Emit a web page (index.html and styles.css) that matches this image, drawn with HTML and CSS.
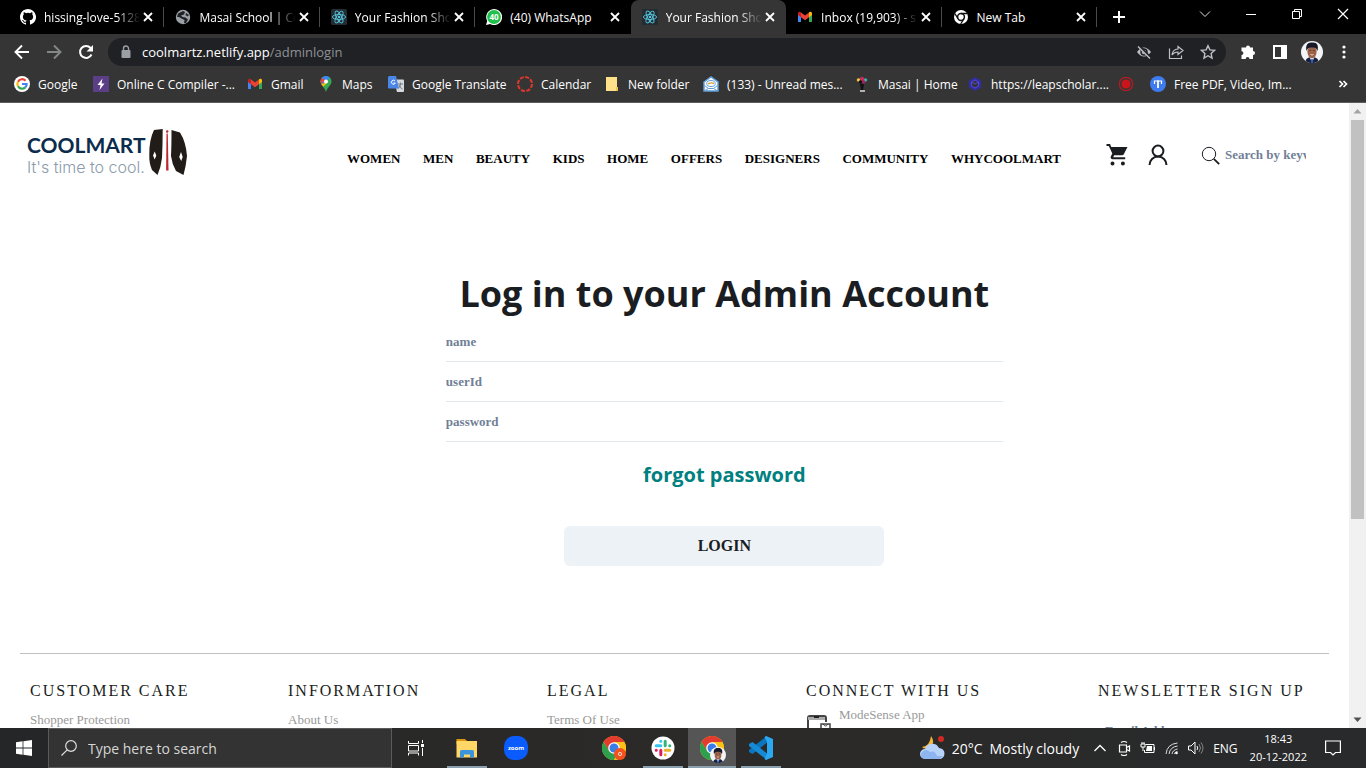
FILE: index.html
```
<!DOCTYPE html>
<html lang="en">
<head>
<meta charset="utf-8">
<title>Your Fashion Shop</title>
<link rel="stylesheet" href="styles.css">
</head>
<body>
<svg class="sprite" aria-hidden="true">
  <symbol id="close" viewBox="0 0 16 16"><path d="M4 4l8 8M12 4l-8 8" stroke="#fff" stroke-width="1.8" fill="none"/></symbol>
  <symbol id="react" viewBox="0 0 16 16"><rect width="16" height="16" rx="1.5" fill="#222c33"/><g fill="none" stroke="#58c4dc" stroke-width=".9"><ellipse cx="8" cy="8" rx="6.6" ry="2.5"/><ellipse cx="8" cy="8" rx="6.6" ry="2.5" transform="rotate(60 8 8)"/><ellipse cx="8" cy="8" rx="6.6" ry="2.5" transform="rotate(120 8 8)"/></g><circle cx="8" cy="8" r="1.3" fill="#58c4dc"/></symbol>
  <symbol id="gmail" viewBox="0 0 16 16"><path d="M1 4v9h3V7.200z" fill="#4285f4"/><path d="M12 7.200V13h3V4z" fill="#34a853"/><path d="M4 3.500v4.700l4 3 4-3V3.500L8 6.500z" fill="#ea4335"/><path d="M1 4.500c0-2 2-2.200 3-1.200v5L1 6z" fill="#c5221f"/><path d="M15 4.500c0-2-2-2.200-3-1.200v5L15 6z" fill="#fbbc04"/></symbol>
  <symbol id="chrome" viewBox="0 0 24 24"><circle cx="12" cy="12" r="12" fill="#fbc116"/><path d="M1.600 6A12 12 0 0 1 22.400 6H12L7 15z" fill="#e33b2e"/><path d="M1.600 6A12 12 0 0 0 12 24l5-9-9.500.500z" fill="#2da04e"/><path d="M12 6.500h10.700A12 12 0 0 1 12 24l5-9z" fill="#fbc116"/><circle cx="12" cy="12" r="5.800" fill="#fff"/><circle cx="12" cy="12" r="4.500" fill="#3a7de8"/></symbol>
  <symbol id="face" viewBox="0 0 22 22"><circle cx="11" cy="11" r="11" fill="#f3f4f6"/><path d="M4.500 20a11 11 0 0 0 13 0c-1-3-3-4-6.500-4s-5.500 1-6.500 4z" fill="#17203c"/><path d="M8.500 16h5l-2.500 5.500z" fill="#dbe8ff"/><path d="M10.300 18h1.400l.5 4h-2.400z" fill="#3457a8"/><ellipse cx="11" cy="11" rx="4.600" ry="6.200" fill="#9c6248"/><path d="M5.600 10C4 4 7 1 11 1.500c5-.5 7 3 5.400 8.500C15.500 7 14 6 11 6.500 8 6 6.500 7 5.600 10z" fill="#17182a"/><path d="M8.300 9.500h1.500M12.200 9.500h1.500" stroke="#5a382d"/><path d="M9.500 13.500q1.500 1 3 0" stroke="#e8d5cc" fill="none"/></symbol>
</svg>

<header class="browser">
  <div class="tabstrip">
    <div class="tabs">
      <div class="tab"><svg class="icon" viewBox="0 0 16 16"><path fill="#fff" d="M8 0C3.580 0 0 3.580 0 8c0 3.540 2.290 6.530 5.470 7.590.4.070.55-.17.55-.38 0-.19-.010-.82-.010-1.490-2.010.37-2.530-.49-2.690-.94-.090-.23-.48-.94-.82-1.130-.28-.15-.68-.52-.010-.53.63-.010 1.080.58 1.230.82.72 1.210 1.870.87 2.330.66.070-.52.28-.87.51-1.070-1.780-.2-3.640-.89-3.640-3.950 0-.87.31-1.590.82-2.150-.080-.2-.36-1.020.080-2.120 0 0 .67-.21 2.200.82a7.600 7.600 0 0 1 4 0c1.530-1.040 2.200-.82 2.200-.82.44 1.100.16 1.920.080 2.120.51.56.82 1.270.82 2.150 0 3.070-1.870 3.750-3.650 3.950.29.25.54.73.54 1.480 0 1.070-.010 1.930-.010 2.200 0 .21.15.46.55.38A8 8 0 0 0 8 0z"/></svg><span class="tab-title">hissing-love-5128</span><button class="tab-close" aria-label="Close tab"><svg class="icon"><use href="#close"/></svg></button></div>
      <div class="tab"><svg class="icon" viewBox="0 0 16 16"><circle cx="8" cy="8" r="7.200" fill="#9aa0a6"/><path d="M3 4.500L8 2l2 1-1 2.500-3 1 1.500 1.500 3 .500 2.500 2-2 3.500H9l.500-3-3-1.500L4 8H2z" fill="#202124"/><path d="M11 4l3 2-1.500 1.500L10.500 6z" fill="#202124"/></svg><span class="tab-title">Masai School | Co</span><button class="tab-close" aria-label="Close tab"><svg class="icon"><use href="#close"/></svg></button></div>
      <div class="tab"><svg class="icon"><use href="#react"/></svg><span class="tab-title">Your Fashion Sho</span><button class="tab-close" aria-label="Close tab"><svg class="icon"><use href="#close"/></svg></button></div>
      <div class="tab before-active"><svg class="icon" viewBox="0 0 16 16"><path d="M0 16l1.200-4A8 8 0 1 1 4.200 15z" fill="#fff"/><circle cx="8" cy="8" r="6.900" fill="#1fc14b"/><text x="8" y="10.800" class="badge-text">40</text></svg><span class="tab-title whole">(40) WhatsApp</span><button class="tab-close" aria-label="Close tab"><svg class="icon"><use href="#close"/></svg></button></div>
      <div class="tab active"><svg class="icon"><use href="#react"/></svg><span class="tab-title">Your Fashion Sho</span><button class="tab-close" aria-label="Close tab"><svg class="icon"><use href="#close"/></svg></button></div>
      <div class="tab"><svg class="icon"><use href="#gmail"/></svg><span class="tab-title">Inbox (19,903) - s</span><button class="tab-close" aria-label="Close tab"><svg class="icon"><use href="#close"/></svg></button></div>
      <div class="tab"><svg class="icon" viewBox="0 0 16 16"><circle cx="8" cy="8" r="7" fill="#fff"/><circle cx="8" cy="8" r="3.400" fill="none" stroke="#111" stroke-width="1.500"/><path d="M8 4.500h6.500M5 9.700L1.800 4.500M11 9.700l-3.300 5.300" stroke="#111" stroke-width="1.300"/></svg><span class="tab-title whole">New Tab</span><button class="tab-close" aria-label="Close tab"><svg class="icon"><use href="#close"/></svg></button></div>
    </div>
    <button class="new-tab" aria-label="New tab"><svg class="icon" viewBox="0 0 16 16"><path d="M8 2v12M2 8h12" stroke="#fff" stroke-width="2"/></svg></button>
    <div class="window-controls">
      <button aria-label="Search tabs"><svg class="icon" viewBox="0 0 16 16"><path d="M3 5.500l5 5 5-5" stroke="#ddd" fill="none"/></svg></button>
      <button aria-label="Minimize"><svg class="icon" viewBox="0 0 16 16"><path d="M3 8.500h10" stroke="#fff"/></svg></button>
      <button aria-label="Restore"><svg class="icon" viewBox="0 0 16 16"><path d="M3.500 5.500h7v7h-7zM5.500 5V3.500h7v7H11" stroke="#fff" fill="none"/></svg></button>
      <button aria-label="Close"><svg class="icon" viewBox="0 0 16 16"><path d="M3 3l10 10M13 3L3 13" stroke="#fff" stroke-width="1.200"/></svg></button>
    </div>
  </div>

  <div class="toolbar">
    <button class="tool" aria-label="Back"><svg class="icon" viewBox="0 0 16 16"><path d="M15 8H2M8 1.500L1.500 8 8 14.500" stroke="#fff" stroke-width="1.900" fill="none"/></svg></button>
    <button class="tool" aria-label="Forward"><svg class="icon" viewBox="0 0 16 16"><path d="M1 8h13M8 1.500L14.500 8 8 14.500" stroke="#858687" stroke-width="1.900" fill="none"/></svg></button>
    <button class="tool" aria-label="Reload"><svg class="icon" viewBox="0 0 16 16"><path d="M13.500 10.500A6 6 0 1 1 12.600 4" stroke="#fff" stroke-width="2" fill="none"/><path d="M15 1v6.500H8.500z" fill="#fff"/></svg></button>
    <div class="omnibox">
      <svg class="icon" viewBox="0 0 16 16"><rect x="3.500" y="6" width="9" height="8" rx="1" fill="#9aa0a6"/><path d="M5.500 6.500V4.500a2.500 2.500 0 0 1 5 0v2" stroke="#9aa0a6" stroke-width="1.400" fill="none"/></svg>
      <span class="url">coolmartz.netlify.app<span class="path">/adminlogin</span></span>
      <button class="tool" aria-label="Third-party cookies blocked"><svg class="icon" viewBox="0 0 16 16"><path d="M1 8q7-9 14 0-7 9-14 0z" fill="#bdc1c6"/><circle cx="8" cy="8" r="3" fill="#bdc1c6" stroke="#202124" stroke-width="1.500"/><path d="M2.500 1.500l12 12.500" stroke="#202124" stroke-width="3"/><path d="M2 2.500l12 12" stroke="#bdc1c6" stroke-width="1.400"/></svg></button>
      <button class="tool" aria-label="Share"><svg class="icon" viewBox="0 0 16 16"><path d="M1.500 4.500v10h12v-3M10 2.500l5 4-5 4V8Q6 8 4 11q.500-5.500 6-6z" stroke="#bdc1c6" stroke-width="1.200" fill="none"/></svg></button>
      <button class="tool" aria-label="Bookmark"><svg class="icon" viewBox="0 0 16 16"><path d="M8 1.700l1.900 4.200 4.600.500-3.400 3.100.900 4.500-4-2.300L4 14l.900-4.500-3.400-3.100 4.600-.500z" stroke="#bdc1c6" stroke-width="1.400" fill="none"/></svg></button>
    </div>
    <div class="extensions">
      <button class="tool" aria-label="Extensions"><svg class="icon" viewBox="0 0 16 16"><path d="M6 3.500a2 2 0 0 1 4 0h3V7a2 2 0 0 1 0 4v4H9.500a1.900 1.900 0 0 0-3.800 0H1.500v-4a1.900 1.900 0 0 0 0-3.800V3.500z" fill="#fff"/></svg></button>
      <button class="tool" aria-label="Side panel"><svg class="icon" viewBox="0 0 16 16"><path d="M1 1h14v14H1zM3 3v10h6V3z" fill="#fff" fill-rule="evenodd"/></svg></button>
      <button class="tool" aria-label="Profile"><svg class="avatar"><use href="#face"/></svg></button>
      <button class="tool" aria-label="Menu"><svg class="icon" viewBox="0 0 16 16"><g fill="#fff"><circle cx="8" cy="3" r="1.600"/><circle cx="8" cy="8" r="1.600"/><circle cx="8" cy="13" r="1.600"/></g></svg></button>
    </div>
  </div>

  <nav class="bookmarks" aria-label="Bookmarks">
    <a href="#"><svg class="icon" viewBox="0 0 16 16"><circle cx="8" cy="8" r="8" fill="#fff"/><g fill="none" stroke-width="2.200"><path d="M11.500 4.700A4.600 4.600 0 0 0 4 5.700" stroke="#ea4335"/><path d="M4 5.700a4.600 4.600 0 0 0 0 4.600" stroke="#fbbc04"/><path d="M4 10.300a4.600 4.600 0 0 0 7.300 1.100" stroke="#34a853"/><path d="M11.300 11.400A4.600 4.600 0 0 0 12.600 8H8" stroke="#4285f4"/></g></svg>Google</a>
    <a href="#"><svg class="icon" viewBox="0 0 16 16"><rect width="16" height="16" fill="#5a3f87"/><path d="M9.500 2.500L4.500 9h3l-1 5 5-6.500h-3z" fill="#fff"/></svg>Online C Compiler -...</a>
    <a href="#"><svg class="icon"><use href="#gmail"/></svg>Gmail</a>
    <a href="#"><svg class="icon" viewBox="0 0 16 16"><path d="M8 0a5.500 5.500 0 0 1 5.500 5.500C13.500 9 9.500 11 8 16 6.500 11 2.500 9 2.500 5.500A5.500 5.500 0 0 1 8 0z" fill="#34a853"/><path d="M3.500 9L12 1.700A5.500 5.500 0 0 0 3.800 2L2.500 5.500z" fill="#4285f4"/><path d="M3.800 2A5.500 5.500 0 0 0 3.300 8L7 4z" fill="#ea4335"/><path d="M3.300 8l2 2.700L10 6z" fill="#fbbc04"/><circle cx="8" cy="5.500" r="2" fill="#fff"/></svg>Maps</a>
    <a href="#"><svg class="icon" viewBox="0 0 16 16"><path d="M6 3.500h9a1 1 0 0 1 1 1V15a1 1 0 0 1-1 1H9z" fill="#d5d8dc"/><path d="M10 8h5M12.500 6.500V8q0 3-2.500 4.500M11 9q1 3 3.500 4" stroke="#747b84" fill="none"/><path d="M1 0h7l3 12.500H1a1 1 0 0 1-1-1V1z" fill="#4a86e8"/><path d="M7 5a2 2 0 1 0 .3 2H5.500" stroke="#fff" fill="none"/></svg>Google Translate</a>
    <a href="#"><svg class="icon" viewBox="0 0 16 16"><circle cx="8" cy="8" r="7" fill="none" stroke="#e0382e" stroke-width="2" stroke-dasharray="4 1.500"/></svg>Calendar</a>
    <a href="#"><svg class="icon" viewBox="0 0 16 16"><path d="M2 1h11v10l1 1v3H2z" fill="#ffe08a"/><path d="M12 11h2v4h-2z" fill="#eec24c"/></svg>New folder</a>
    <a href="#"><svg class="icon" viewBox="0 0 16 16"><path d="M1 6l7-5 7 5v9H1z" fill="#fff" stroke="#5f9dd8" stroke-width="1.500"/><ellipse cx="8" cy="7.500" rx="4.300" ry="3" fill="#fff" stroke="#5f9dd8"/><path d="M5 8q3-2 6-.5" stroke="#d69b35" stroke-width="1.400" fill="none"/><path d="M1.500 9.500l4 3h5l4-3M2 14.500l3.500-2M14 14.500l-3.500-2" fill="none" stroke="#5f9dd8"/></svg>(133) - Unread mes...</a>
    <a href="#"><svg class="icon" viewBox="0 0 16 16"><circle cx="4.500" cy="4" r="1.800" fill="#f0c640"/><circle cx="8" cy="3" r="2.200" fill="#c92a5c"/><circle cx="11.500" cy="4" r="1.800" fill="#3caeaa"/><circle cx="6.500" cy="6" r="1.800" fill="#111"/><circle cx="9.700" cy="6" r="1.800" fill="#a0245a"/><path d="M6 8h4l-1 6H7z" fill="#111"/><path d="M6 15h5" stroke="#ddd" stroke-width="1.500"/></svg>Masai | Home</a>
    <a href="#"><svg class="icon" viewBox="0 0 16 16"><path d="M8 1.200l6 3.400v6.800l-6 3.400-6-3.400V4.600z" fill="#322da4"/><path d="M8 4l3.500 2v4L8 12l-3.500-2V6z" fill="#333" stroke="#5548e0"/><path d="M5 6.500l3 1.500 3-1.500" stroke="#5548e0" fill="none"/></svg>https://leapscholar....</a>
    <a href="#" aria-label="Recorder"><svg class="icon" viewBox="0 0 16 16"><circle cx="8" cy="8" r="6.700" fill="none" stroke="#b51c20" stroke-width="1.200"/><circle cx="8" cy="8" r="4.600" fill="#c9151b"/></svg></a>
    <a href="#"><svg class="icon" viewBox="0 0 16 16"><circle cx="8" cy="8" r="8" fill="#3e7bee"/><path d="M4.500 8V5h7v3" stroke="#fff" stroke-width="1.200" fill="none"/><path d="M8 4.500v7.500" stroke="#fff" stroke-width="1.800"/></svg>Free PDF, Video, Im...</a>
    <button class="tool more" aria-label="More bookmarks"><svg class="icon" viewBox="0 0 16 16"><path d="M4.500 5l3 3-3 3M8.500 5l3 3-3 3" stroke="#fff" stroke-width="1.700" fill="none"/></svg></button>
  </nav>
</header>

<div class="viewport">
  <div class="page">
    <header class="site-header">
      <a class="logo" href="#">
        <span class="logo-words"><span class="logo-name">COOLMART</span><span class="logo-tag">It's time to cool.</span></span>
        <svg class="logo-mark" viewBox="0 0 38 48" aria-hidden="true"><path d="M5 2l8.700-1q0 15-.7 29-1 9-4.500 17L3 42Q0 35 .3 27 0 12 5 2zM22.500 2L31 4.500q6 9.500 7 23.500-1 10-3.500 19L27 43q-4-7-5-15 .5-10 .5-26z" fill="#221c18"/><path d="M5.700 23.500l1.600 4-1.600 4-1.700-4zM32 24l1.700 5-1.500 4-2-4z" fill="#fff"/><path d="M17.500 5.500h1.300l.7 37h-2.400z" fill="#bb2630"/><circle cx="18.200" cy="3.500" r="1.200" fill="#bb2630"/></svg>
      </a>
      <nav class="site-nav">
        <a href="#">WOMEN</a><a href="#">MEN</a><a href="#">BEAUTY</a><a href="#">KIDS</a><a href="#">HOME</a><a href="#">OFFERS</a><a href="#">DESIGNERS</a><a href="#">COMMUNITY</a><a href="#">WHYCOOLMART</a>
      </nav>
      <div class="site-actions">
        <a href="#" aria-label="Cart"><svg class="glyph" viewBox="0 0 24 24"><path fill="#1a1d21" d="M7.500 18.500a2 2 0 1 0 0 4 2 2 0 0 0 0-4zM1.500 1v2h2.300l3.500 7.600-1.400 2.600c-.8 1.400.2 3 1.800 3h12.500v-2H8.200l1-2h7.900c.8 0 1.400-.4 1.700-1L22.500 4H6.200l-1.100-3zM17.900 18.500a2 2 0 1 0 0 4 2 2 0 0 0 0-4z"/></svg></a>
        <a href="#" aria-label="Account"><svg class="glyph" viewBox="0 0 24 24"><circle cx="12" cy="8" r="5.400" fill="none" stroke="#1a1d21" stroke-width="2"/><path d="M3.500 22a8.500 8.500 0 0 1 17 0" fill="none" stroke="#1a1d21" stroke-width="2"/></svg></a>
      </div>
      <form class="site-search">
        <label for="q" aria-label="Search"><svg class="search-icon" viewBox="0 0 20 20"><circle cx="8" cy="9" r="6.700" fill="none" stroke="#1a1d21"/><path d="M12.800 13.800l5.400 5.400" stroke="#1a1d21" stroke-width="1.800"/></svg></label>
        <input id="q" type="text" placeholder="Search by keywords">
      </form>
    </header>

    <main>
      <form class="login">
        <h1>Log in to your Admin Account</h1>
        <input type="text" placeholder="name" aria-label="name">
        <input type="text" placeholder="userId" aria-label="userId">
        <input type="password" placeholder="password" aria-label="password">
        <a class="forgot" href="#">forgot password</a>
        <button class="submit" type="button">LOGIN</button>
      </form>
    </main>

    <footer class="site-footer">
      <section><h2>CUSTOMER CARE</h2><a href="#">Shopper Protection</a></section>
      <section><h2>INFORMATION</h2><a href="#">About Us</a></section>
      <section><h2>LEGAL</h2><a href="#">Terms Of Use</a></section>
      <section><h2>CONNECT WITH US</h2><a class="app-link" href="#"><svg class="app-icon" viewBox="0 0 26 26"><path d="M2 24V4q0-2 2-2h14q2 0 2 2v4" fill="none" stroke="#444" stroke-width="2"/><path d="M2 3h17v3H2z" fill="#aaa"/><path d="M8 3h5" stroke="#222" stroke-width="2"/><path d="M15 24V10h9v14" fill="#fff" stroke="#444" stroke-width="1.500"/><path d="M17 10q2.500 4 5 0" fill="none" stroke="#444"/></svg><span>ModeSense App</span></a></section>
      <section><h2>NEWSLETTER SIGN UP</h2><input type="email" placeholder="Email Address" aria-label="Email Address"></section>
    </footer>
  </div>
  <div class="scrollbar">
    <svg class="arrow" viewBox="0 0 17 17"><path d="M4.500 10.500l4-4.500 4 4.500z" fill="#a3a3a3"/></svg>
    <div class="track"><div class="thumb"></div></div>
    <svg class="arrow" viewBox="0 0 17 17"><path d="M4.500 6.500l4 4.500 4-4.500z" fill="#505050"/></svg>
  </div>
</div>

<footer class="taskbar">
  <button class="slot" aria-label="Start"><svg class="icon" viewBox="0 0 16 16"><path d="M0 2.200l6.600-.9v6.300H0zM7.400 1.200L16 0v7.600H7.400zM0 8.400h6.600v6.300L0 13.800zM7.400 8.400H16V16l-8.600-1.200z" fill="#fff"/></svg></button>
  <label class="task-search"><svg class="icon" viewBox="0 0 16 16"><circle cx="10" cy="6" r="5.300" fill="none" stroke="#ddd" stroke-width="1.200"/><path d="M6.200 9.800L.500 15.500" stroke="#ddd" stroke-width="1.200"/></svg><input type="text" placeholder="Type here to search" aria-label="Type here to search"></label>
  <button class="slot" aria-label="Task view"><svg class="icon" viewBox="0 0 16 16"><path d="M.5 1v2.500h10V1M.5 15.500V13h10v2.500M.5 5.500h10v5.500H.5zM14.500 0v3M14.500 8v8" stroke="#fff" fill="none"/><rect x="13" y="4" width="3" height="3" fill="#fff"/></svg></button>
  <div class="apps">
    <button class="slot open" aria-label="File Explorer"><svg class="app" viewBox="0 0 24 24"><path d="M1.500 3H10l2 2v3H1.500z" fill="#dc9511"/><path d="M1.500 5H22v16.500H1.500z" fill="#ffd766"/><path d="M5 21.500v-6q0-1.500 1.500-1.500h11q1.500 0 1.500 1.500v6h-4v-3H9v3z" fill="#3a94dd"/></svg></button>
    <button class="slot" aria-label="Zoom"><svg class="app" viewBox="0 0 24 24"><rect width="24" height="24" rx="10" fill="#0b5cff"/><text x="12" y="14" class="zoom-text">zoom</text></svg></button>
    <button class="slot after-gap" aria-label="Chrome"><svg class="app" viewBox="0 0 24 24"><use href="#chrome"/><circle cx="18" cy="18" r="6" fill="#f4511e"/><circle cx="18" cy="18" r="1.600" fill="none" stroke="#fff" stroke-width=".8"/></svg></button>
    <button class="slot open" aria-label="Slack"><svg class="app" viewBox="0 0 24 24"><circle cx="12" cy="12" r="11.500" fill="#fff"/><g stroke-width="3" stroke-linecap="round"><path d="M9.800 5.200v.1M5.200 9.800h4.600" stroke="#36c5f0"/><path d="M14.200 5.200v4.600M18.800 9.800h-.1" stroke="#2eb67d"/><path d="M14.200 14.200h4.600M14.200 18.800v-.1" stroke="#ecb22e"/><path d="M9.800 14.200v4.600M5.200 14.200h.1" stroke="#e01e5a"/></g></svg></button>
    <button class="slot current" aria-label="Chrome, active window"><svg class="app" viewBox="0 0 24 24"><use href="#chrome"/></svg><svg class="profile" viewBox="0 0 22 22"><use href="#face"/></svg></button>
    <button class="slot open" aria-label="Visual Studio Code"><svg class="app" viewBox="0 0 24 24"><path d="M18 0v6.500L3.500 18 0 16v-2z" fill="#0b75bd"/><path d="M18 24v-6.500L3.500 6 0 8v2z" fill="#168bd5"/><path d="M17 0l7 3v18l-7 3-1.500-1 2.500-5V6L15.500 1z" fill="#2aa9f2"/></svg></button>
  </div>
  <div class="tray">
    <svg class="weather" viewBox="0 0 26 26"><path d="M12 1q5 7-1 11-5 3-8 0 8-1 9-11z" fill="#f5b83b"/><path d="M6 24a5 5 0 0 1 0-10 7.500 7.500 0 0 1 14-1 5.500 5.500 0 0 1 0 11z" fill="#b8d3fa"/><path d="M3 23a5 5 0 0 1 8-6q5-2 7 4h6l-4 3H6z" fill="#8eb5ef"/><circle cx="22" cy="4" r="3" fill="#d12a20"/></svg>
    <span class="temp">20°C</span><span class="sky">Mostly cloudy</span>
    <svg class="tray-icon" viewBox="0 0 16 16"><path d="M2.500 11L8 5.500l5.500 5.500" stroke="#fff" stroke-width="1.300" fill="none"/></svg>
    <svg class="tray-icon" viewBox="0 0 16 16"><path d="M3.500 5h7v7h-7zM10.500 7.500l3-1.500v5l-3-1.500M5 2.500q3-2 6 0M5 14.500q3 2 6 0" stroke="#fff" fill="none" stroke-width="1.200"/></svg>
    <svg class="tray-icon" viewBox="0 0 16 16"><path d="M5.500 4.500h8.500v8H4.500V10M14.500 7v3" stroke="#fff" fill="none"/><path d="M7 6h5v5H6z" fill="#fff"/><path d="M1 4h4v3H1zM2 2v2M4 2v2M3 7v4" stroke="#fff" fill="none"/></svg>
    <svg class="tray-icon wifi" viewBox="0 0 16 16"><g fill="none" stroke="#ddd"><path d="M2 14Q3 4 13.500 3M5 14q1-7 8.500-8M8 14q.500-4 5.500-5"/><path d="M10.500 14q0-2 3-2.500"/></g><circle cx="12.500" cy="13" r="1.300" fill="#fff"/></svg>
    <svg class="tray-icon" viewBox="0 0 16 16"><path d="M.5 6H3l4-4v12l-4-4H.5z" stroke="#fff" fill="none"/><path d="M9 6q1.500 2 0 4" stroke="#fff" fill="none"/><path d="M11 4q3 4 0 8M13 2.500q4 5.500 0 11" stroke="#888" fill="none"/></svg>
    <span class="lang">ENG</span>
    <div class="clock"><span>18:43</span><span>20-12-2022</span></div>
    <svg class="tray-icon" viewBox="0 0 16 16"><path d="M.6 1h14.800v11.500H10.500L8 15l-2.500-2.500H.6z" stroke="#fff" stroke-width="1.200" fill="none"/></svg>
  </div>
</footer>
</body>
</html>
```
FILE: styles.css
```
* { box-sizing: border-box; }

body {
  margin: 0;
  height: 100vh;
  display: flex;
  flex-direction: column;
  overflow: hidden;
  font-family: "Open Sans", "Noto Sans", sans-serif;
  font-size: 12px;
  color: #fff;
}

a { color: inherit; text-decoration: none; }

button {
  border: 0;
  padding: 0;
  background: none;
  font: inherit;
  color: inherit;
}

svg { display: block; flex: none; }
.sprite { position: absolute; width: 0; height: 0; }
.icon { width: 16px; height: 16px; }

/* Browser frame */
.browser { background: #353535; border-bottom: 1px solid #5c5c5c; }
.tabstrip { display: flex; height: 34px; background: #000; }
.tabs { display: flex; flex: 1; min-width: 0; padding-left: 9px; }
.tab {
  display: flex;
  align-items: center;
  flex: 1;
  min-width: 0;
  padding: 0 8px 0 11px;
  background: linear-gradient(#4a4a4a, #4a4a4a) right center / 1px 20px no-repeat;
}
.tab.before-active { background: none; }
.tab.active { background: #353535; border-radius: 8px 8px 0 0; }
.tab-title {
  flex: 1;
  min-width: 0;
  margin-left: 8px;
  overflow: hidden;
  white-space: nowrap;
  mask-image: linear-gradient(to right, #000 calc(100% - 24px), transparent);
}
.tab-title.whole { mask-image: none; }
.badge-text { font: bold 8px "Open Sans", sans-serif; fill: #fff; text-anchor: middle; }
.new-tab { flex: none; width: 85px; padding-left: 14px; }
.window-controls { display: flex; flex: none; height: 28px; }
.window-controls button { width: 46px; display: grid; place-items: center; }

.toolbar { display: flex; align-items: center; height: 36px; padding-left: 6px; }
.tool { width: 32px; height: 28px; display: grid; place-items: center; flex: none; }
.omnibox {
  display: flex;
  align-items: center;
  flex: 1;
  height: 28px;
  margin-left: 6px;
  padding: 0 2px 0 10px;
  border-radius: 14px;
  background: #202124;
}
.url { flex: 1; margin-left: 8px; font-size: 13px; }
.path { color: #8e9196; }
.extensions { display: flex; padding: 0 6px; }
.avatar { width: 22px; height: 22px; }

.bookmarks {
  display: grid;
  grid-template-columns: 79px 154px 71px 70px 129px 87px 99px 151px 113px 151px 32px 1fr auto;
  align-items: center;
  height: 32px;
  padding: 0 7px 4px 14px;
}
.bookmarks a { display: flex; align-items: center; gap: 8px; white-space: nowrap; }

/* Store page */
.viewport { display: flex; flex: 1; min-height: 0; background: #fff; }
.page {
  flex: 1;
  min-width: 0;
  overflow: hidden;
  font-family: "Liberation Serif", serif;
  font-size: 13px;
  color: #1a1d21;
}
.page input {
  border: 0;
  padding: 0;
  background: none;
  outline: none;
  font: bold 13px "Liberation Serif", serif;
}
.page input::placeholder { color: #718096; opacity: 1; }

.site-header { display: flex; align-items: center; height: 104px; padding: 0 43px 0 27px; }
.logo { display: flex; align-items: center; gap: 4px; width: 320px; padding-bottom: 6px; flex: none; }
.logo-words { display: flex; flex-direction: column; width: 118px; padding-top: 6px; white-space: nowrap; }
.logo-name { font: bold 21px/24px Lato, sans-serif; color: #0b2c4c; }
.logo-tag { font: 300 16px/20px Inter, sans-serif; color: #8b9bab; }
.logo-mark { width: 38px; height: 48px; }
.site-nav {
  display: flex;
  justify-content: space-between;
  flex: 1;
  padding-top: 8px;
  font-weight: bold;
  color: #000;
}
.site-actions { display: flex; gap: 17px; margin: 0 31px 0 44px; }
.glyph { width: 24px; height: 24px; }
.site-search { display: flex; align-items: center; gap: 4px; }
.search-icon { width: 20px; height: 20px; }
.site-search input { width: 81px; }

.login {
  display: flex;
  flex-direction: column;
  align-items: center;
  width: 557px;
  margin-left: 33.05%;
  padding: 59px 0 87px;
}
.login h1 {
  margin: 0;
  font: bold 36px/56px "Open Sans", "Noto Sans", sans-serif;
  white-space: nowrap;
}
.login input { width: 100%; height: 40px; border-bottom: 1px solid #e2e8f0; }
.forgot { margin-top: 18px; font: bold 20px/30px "Open Sans", "Noto Sans", sans-serif; color: #008080; }
.submit {
  width: 320px;
  height: 40px;
  margin-top: 36px;
  border-radius: 6px;
  background: #edf2f7;
  font: bold 16px "Liberation Serif", serif;
}

.site-footer {
  display: grid;
  grid-template-columns: 258px 259px 259px 292px 1fr;
  margin: 0 20px;
  padding: 28px 0 0 10px;
  border-top: 1px solid #c0c0c0;
}
.site-footer h2 { margin: 0 0 12px; font-size: 16px; line-height: 18px; font-weight: normal; letter-spacing: 2px; white-space: nowrap; }
.site-footer a { color: #999; }
.app-link { display: flex; gap: 7px; margin-top: 14px; }
.app-link span { margin-top: -7px; }
.app-icon { width: 26px; height: 26px; }
.site-footer input { margin: 11px 7px; }

.scrollbar { display: flex; flex-direction: column; width: 17px; background: #f1f1f1; }
.arrow { width: 17px; height: 17px; }
.track { flex: 1; padding: 0 2px; }
.thumb { height: 67.5%; background: #c1c1c1; }

/* Windows taskbar */
.taskbar { display: flex; height: 40px; flex: none; background: linear-gradient(90deg, #242628, #2c2a28 50%, #282a2c); }
.slot { position: relative; display: grid; place-items: center; width: 48px; height: 40px; }
.task-search {
  display: flex;
  align-items: center;
  gap: 11px;
  width: 344px;
  padding-left: 12px;
  background: #333;
  border: 1px solid #5a5a5a;
}
.task-search input {
  flex: 1;
  min-width: 0;
  border: 0;
  padding: 0;
  background: none;
  font: 14px "Open Sans", sans-serif;
}
.task-search input::placeholder { color: #d6d6d6; opacity: 1; }
.apps { display: flex; gap: 1px; margin-left: 3px; }
.app { width: 24px; height: 24px; }
.after-gap { margin-left: 49px; }
.open { background: linear-gradient(#8ba0ae, #8ba0ae) center bottom / 40px 2px no-repeat; }
.current { background: #555 linear-gradient(#8ba0ae, #8ba0ae) center bottom / 48px 2px no-repeat; }
.profile { position: absolute; right: 10px; bottom: 5px; width: 16px; height: 16px; }
.zoom-text { font: bold 6px "Open Sans", sans-serif; fill: #fff; text-anchor: middle; }
.tray { display: flex; align-items: center; margin-left: auto; padding-right: 25px; white-space: nowrap; }
.weather { width: 26px; height: 26px; }
.temp, .sky { margin-left: 7px; font-size: 14px; }
.tray-icon { width: 16px; height: 16px; }
.sky + .tray-icon { margin-left: 13px; }
.tray-icon + .tray-icon { margin-left: 8px; }
.lang { margin-left: 9px; }
.clock { display: flex; flex-direction: column; align-items: center; margin: 0 18px 0 12px; font-size: 11px; line-height: 18px; }
```
